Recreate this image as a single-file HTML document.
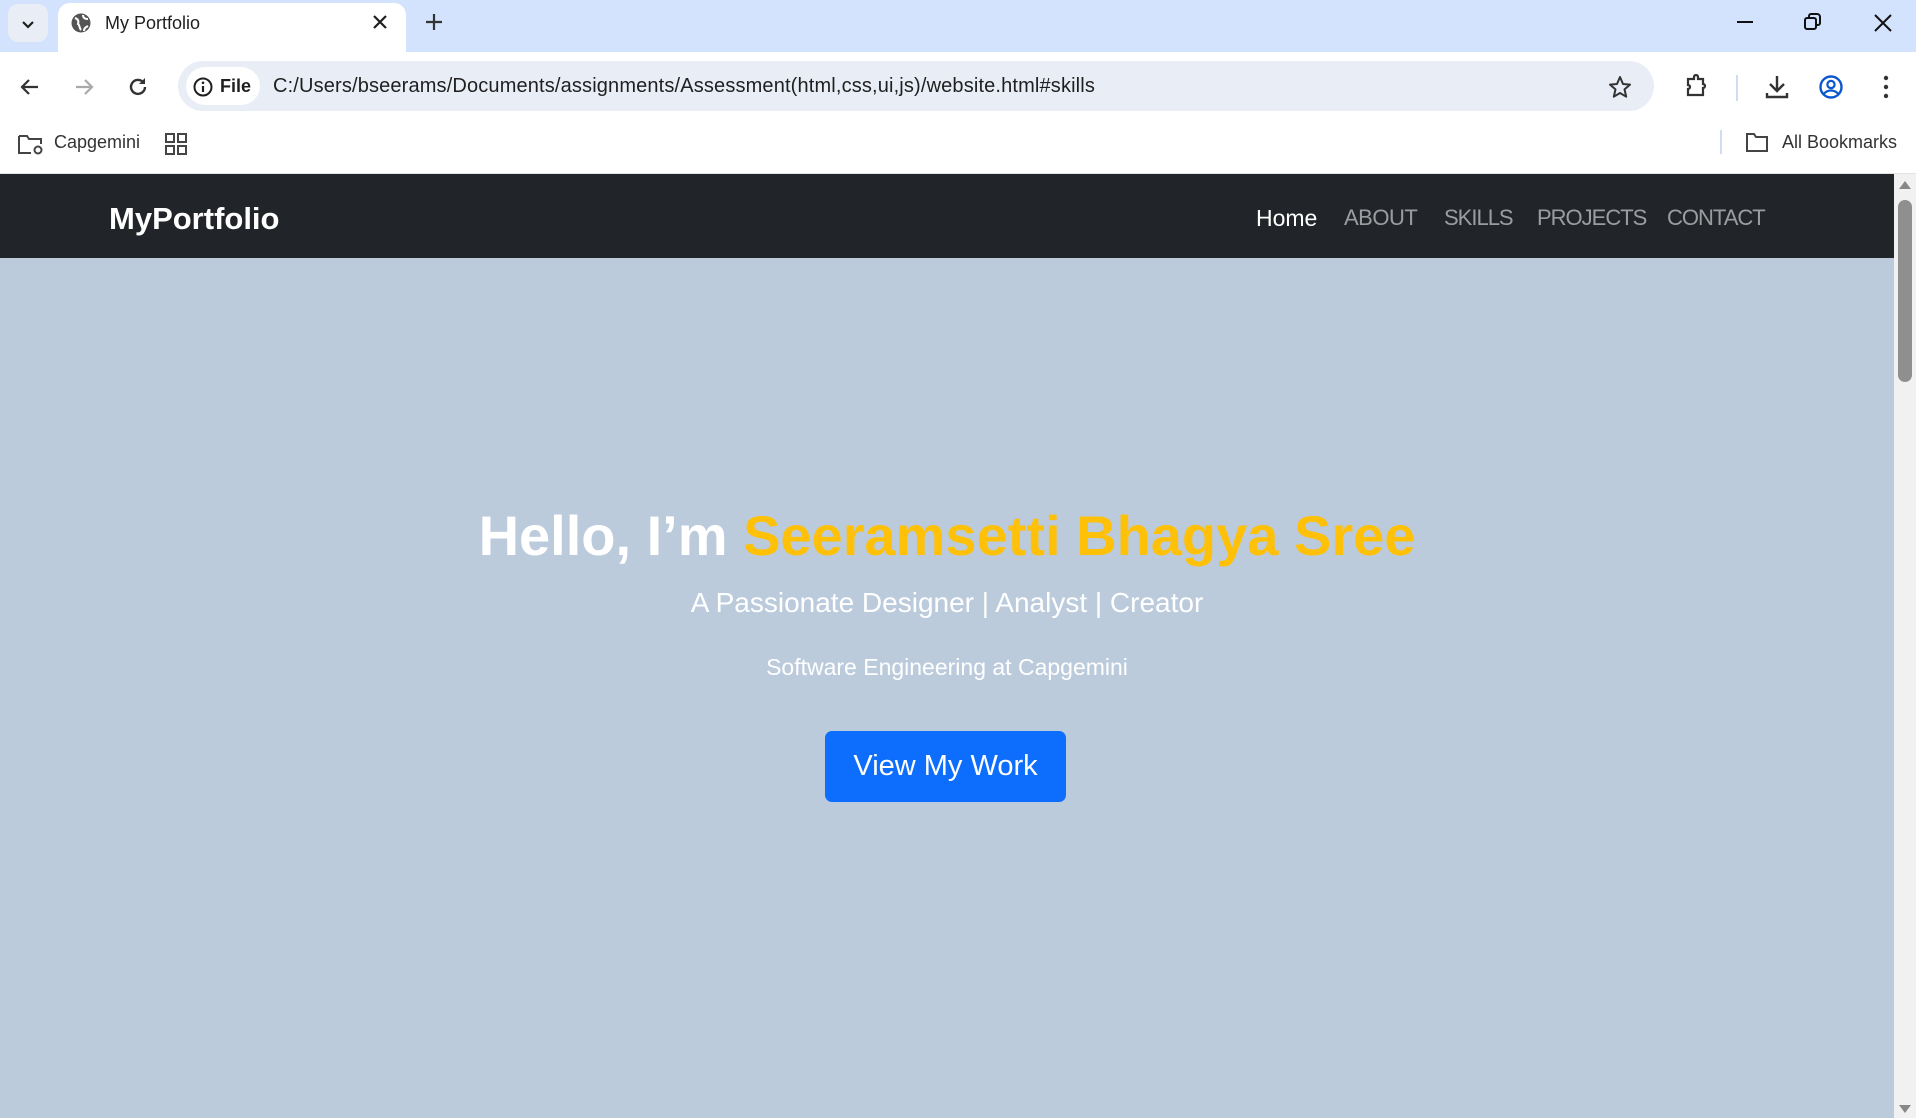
<!DOCTYPE html>
<html><head><meta charset="utf-8"><style>
*{margin:0;padding:0;box-sizing:border-box}
body{width:1916px;height:1118px;overflow:hidden;font-family:"Liberation Sans",sans-serif;background:#bbcbdc;position:relative}
.abs{position:absolute}
.tabbar{left:0;top:0;width:1916px;height:52px;background:#d3e3fd}
.tab{left:58px;top:3px;width:348px;height:49px;background:#fff;border-radius:12px 12px 0 0}
.toolbar{left:0;top:52px;width:1916px;height:68px;background:#fff}
.omni{left:178px;top:61px;width:1476px;height:50px;background:#e9eef6;border-radius:25px}
.chip{left:186px;top:67px;width:74px;height:38px;background:#fff;border-radius:19px;font-size:18px;font-weight:bold;color:#1f1f1f;line-height:38px;padding-left:34px}
.bm{left:0;top:120px;width:1916px;height:54px;background:#fff;border-bottom:1px solid #e3e3e3}
.nav{left:0;top:174px;width:1894px;height:84px;background:#212529}
.brand{left:109px;top:201px;font-size:31px;font-weight:bold;color:#fff}
.links{top:205px;font-size:22px;color:rgba(255,255,255,.55);white-space:nowrap}
.scroll{left:1894px;top:174px;width:22px;height:944px;background:#f1f1f1}
.thumb{left:1898px;top:200px;width:14px;height:182px;background:#8f8f8f;border-radius:7px}
.center{left:0;width:1894px;text-align:center;color:#fff}
.btn{left:825px;top:731px;width:241px;height:71px;background:#0d6efd;border-radius:7px;color:#fff;font-size:29px;line-height:71px;text-align:center}
svg{position:absolute}
</style></head><body>
<div class="abs tabbar"></div>
<div class="abs" style="left:8px;top:4px;width:40px;height:38px;background:#e9eef6;border-radius:10px"></div>
<svg style="left:18px;top:14px" width="20" height="20"><path d="M5 8l5 5 5-5" stroke="#1f1f1f" stroke-width="2.2" fill="none"/></svg>
<div class="abs tab"></div>
<svg style="left:70px;top:12px" width="22" height="22"><circle cx="11" cy="11" r="9.5" fill="#555"/><path d="M5 6c3 1 4 3 3 6 2 1 1 4 3 6M13 3c0 3 2 4 5 4M14 19c0-3 2-4 4-5" stroke="#fff" stroke-width="2" fill="none"/></svg>
<div class="abs" style="left:105px;top:13px;font-size:18px;color:#1f1f1f">My Portfolio</div>
<svg style="left:372px;top:14px" width="16" height="16"><path d="M2 2l12 12M14 2L2 14" stroke="#1f1f1f" stroke-width="2.2"/></svg>
<svg style="left:424px;top:12px" width="20" height="20"><path d="M10 2v16M2 10h16" stroke="#333" stroke-width="2.2"/></svg>
<svg style="left:1734px;top:12px" width="24" height="24"><path d="M3 10h16" stroke="#111" stroke-width="2"/></svg>
<svg style="left:1802px;top:11px" width="24" height="24"><rect x="3" y="7" width="11" height="11" rx="2" stroke="#111" stroke-width="2" fill="none"/><path d="M7 7V5a2 2 0 0 1 2-2h6a3 3 0 0 1 3 3v6a2 2 0 0 1-2 2h-2" stroke="#111" stroke-width="2" fill="none"/></svg>
<svg style="left:1872px;top:12px" width="24" height="24"><path d="M3 3l16 16M19 3L3 19" stroke="#111" stroke-width="2"/></svg>
<div class="abs toolbar"></div>
<svg style="left:18px;top:75px" width="24" height="24"><path d="M20 12H5M11 5l-7 7 7 7" stroke="#333" stroke-width="2.2" fill="none"/></svg>
<svg style="left:72px;top:75px" width="24" height="24"><path d="M4 12h15M13 5l7 7-7 7" stroke="#aaa" stroke-width="2.2" fill="none"/></svg>
<svg style="left:126px;top:75px" width="24" height="24"><path d="M19 12a7 7 0 1 1-2-5" stroke="#333" stroke-width="2.4" fill="none"/><path d="M19 3v6h-6z" fill="#333"/></svg>
<div class="abs omni"></div>
<div class="abs chip">File</div>
<svg style="left:192px;top:76px" width="22" height="22"><circle cx="11" cy="11" r="8.5" stroke="#1f1f1f" stroke-width="2" fill="none"/><path d="M11 10v6" stroke="#1f1f1f" stroke-width="2.2"/><circle cx="11" cy="6.8" r="1.3" fill="#1f1f1f"/></svg>
<div class="abs" style="left:273px;top:75px;font-size:20px;color:#1f1f1f;letter-spacing:0.15px">C:/Users/bseerams/Documents/assignments/Assessment(html,css,ui,js)/website.html#skills</div>
<svg style="left:1607px;top:74px" width="26" height="26"><path d="M13 3l3 7 7 .6-5.5 4.8 1.7 7.3L13 19l-6.2 3.7 1.7-7.3L3 10.6l7-.6z" stroke="#333" stroke-width="2" fill="none" stroke-linejoin="round"/></svg>
<svg style="left:1683px;top:73px" width="28" height="28"><path d="M5 6h6V4a2 2 0 0 1 4 0v2h5v5a2 2 0 0 1 0 4v7H5v-6a2 2 0 0 0 0-4z" stroke="#333" stroke-width="2.2" fill="none"/></svg>
<div class="abs" style="left:1736px;top:75px;width:2px;height:26px;background:#cfdcf3"></div>
<svg style="left:1762px;top:72px" width="30" height="30"><path d="M15 4v15M8 12l7 7 7-7M5 21v4h20v-4" stroke="#333" stroke-width="2.4" fill="none"/></svg>
<svg style="left:1816px;top:72px" width="30" height="30"><circle cx="15" cy="15" r="10.5" stroke="#0b57d0" stroke-width="2.4" fill="none"/><circle cx="15" cy="12.5" r="3.6" stroke="#0b57d0" stroke-width="2.2" fill="none"/><path d="M8 21.5c4-4 10-4 14 0" stroke="#0b57d0" stroke-width="2.2" fill="none"/></svg>
<svg style="left:1876px;top:74px" width="20" height="26"><circle cx="10" cy="4" r="2.2" fill="#333"/><circle cx="10" cy="13" r="2.2" fill="#333"/><circle cx="10" cy="22" r="2.2" fill="#333"/></svg>
<div class="abs bm"></div>
<svg style="left:16px;top:130px" width="30" height="28"><path d="M3 6h8l2 3h12v5M3 6v17h12" stroke="#444" stroke-width="2" fill="none"/><circle cx="22" cy="20" r="3.5" stroke="#444" stroke-width="2" fill="none"/></svg>
<div class="abs" style="left:54px;top:132px;font-size:18px;color:#333">Capgemini</div>
<svg style="left:164px;top:132px" width="24" height="24"><rect x="2" y="2" width="8" height="8" stroke="#444" stroke-width="2" fill="none"/><rect x="14" y="2" width="8" height="8" stroke="#444" stroke-width="2" fill="none"/><rect x="2" y="14" width="8" height="8" stroke="#444" stroke-width="2" fill="none"/><rect x="14" y="14" width="8" height="8" stroke="#444" stroke-width="2" fill="none"/></svg>
<div class="abs" style="left:1720px;top:130px;width:2px;height:24px;background:#cfdcf3"></div>
<svg style="left:1744px;top:130px" width="26" height="24"><path d="M3 4h7l2 3h11v14H3z" stroke="#444" stroke-width="2" fill="none"/></svg>
<div class="abs" style="left:1782px;top:132px;font-size:18px;color:#333">All Bookmarks</div>
<div class="abs nav"></div>
<div class="abs brand">MyPortfolio</div>
<div class="abs links" style="left:1256px;color:#fff;font-size:23px">Home</div>
<div class="abs links" style="left:1344px;letter-spacing:-0.5px">ABOUT</div>
<div class="abs links" style="left:1444px;letter-spacing:-1px">SKILLS</div>
<div class="abs links" style="left:1537px;letter-spacing:-1px">PROJECTS</div>
<div class="abs links" style="left:1667px;letter-spacing:-1px">CONTACT</div>
<div class="abs scroll"></div>
<div class="abs thumb"></div>
<svg style="left:1898px;top:180px" width="14" height="10"><path d="M1 9l6-8 6 8z" fill="#888"/></svg>
<svg style="left:1898px;top:1104px" width="14" height="10"><path d="M1 1l6 8 6-8z" fill="#888"/></svg>
<div class="abs center" style="top:503px;font-size:56px;font-weight:bold">Hello, I’m <span style="color:#ffc107">Seeramsetti Bhagya Sree</span></div>
<div class="abs center" style="top:587px;font-size:28px;font-weight:300">A Passionate Designer | Analyst | Creator</div>
<div class="abs center" style="top:654px;font-size:23px">Software Engineering at Capgemini</div>
<div class="abs btn">View My Work</div>
</body></html>
